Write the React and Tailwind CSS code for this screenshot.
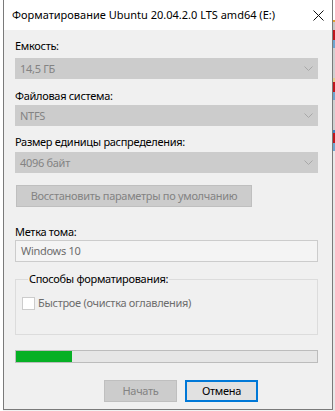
import React from 'react';

// Диалог форматирования Windows (отключённое состояние во время форматирования)
const font = { fontFamily: '"Noto Sans", "Liberation Sans", sans-serif' };

function Chevron() {
  return (
    <svg width="9" height="5" viewBox="0 0 9 5" className="shrink-0">
      <path d="M0.5 0.5 L4.5 4.5 L8.5 0.5" fill="none" stroke="#a8a8a8" strokeWidth="1" />
    </svg>
  );
}

function Combo({ value, className }) {
  return (
    <div className={`ml-[11px] w-[303px] h-[21px] flex items-center justify-between bg-[#cccccc] border border-[#cccccc] pl-[4px] pr-[4px] ${className}`}>
      <span className="text-[#838383] leading-4">{value}</span>
      <Chevron />
    </div>
  );
}

function Label({ children, className }) {
  return <div className={`ml-[11px] h-4 leading-4 text-black ${className}`}>{children}</div>;
}

export default function App() {
  return (
    <div className="w-[335px] h-[411px] flex bg-[#f3f3f3] overflow-hidden text-[11px]" style={font}>
      <div className="w-[3px] bg-white" />
      <div className="w-[330px] h-[410px] flex flex-col border-l border-r border-b border-[#7a7a7a] bg-[#f0f0f0] tracking-[-0.3px]">
        {/* заголовок окна */}
        <div className="h-[30px] bg-white flex items-center justify-between pl-[8px] pr-[8px]">
          <span className="text-black leading-4 whitespace-nowrap tracking-normal">Форматирование Ubuntu 20.04.2.0 LTS amd64 (E:)</span>
          <svg width="11" height="11" viewBox="0 0 11 11">
            <path d="M0.5 0.5 L10.5 10.5 M10.5 0.5 L0.5 10.5" stroke="#111" strokeWidth="1" />
          </svg>
        </div>

        <Label className="mt-[8px]">Емкость:</Label>
        <Combo value="14,5 ГБ" className="mt-[4px]" />

        <Label className="mt-[9px]">Файловая система:</Label>
        <Combo value="NTFS" className="mt-[1px]" />

        <Label className="mt-[8px]">Размер единицы распределения:</Label>
        <Combo value="4096 байт" className="mt-[2px]" />

        <div className="ml-[12px] mt-[12px] w-[236px] h-[22px] flex items-center justify-center bg-[#cccccc] border border-[#bfbfbf] text-[#838383] whitespace-nowrap">
          Восстановить параметры по умолчанию
        </div>

        <Label className="mt-[17px]">Метка тома:</Label>
        <div className="ml-[11px] w-[303px] h-[22px] flex items-center bg-[#f4f4f4] border border-[#cccccc] pl-[5px] text-[#6d6d6d]">
          Windows 10
        </div>

        <fieldset className="ml-[11px] mt-[9px] w-[303px] h-[64px] border border-[#dcdcdc] pl-[6px]">
          <legend className="ml-[6px] px-[1px] leading-4 text-black">Способы форматирования:</legend>
          <div className="mt-[8px] flex items-center">
            <div className="w-[13px] h-[13px] bg-white border border-[#cccccc]" />
            <span className="ml-[3px] leading-4 text-[#6d6d6d]">Быстрое (очистка оглавления)</span>
          </div>
        </fieldset>

        <div className="ml-[11px] mt-[15px] w-[303px] h-[13px] bg-[#e6e6e6] border border-[#bcbcbc] flex">
          <div className="w-[56px] h-full bg-[#06b025]" />
        </div>

        <div className="mt-[17px] pl-[100px] flex gap-[8px]">
          <div className="w-[73px] h-[22px] flex items-center justify-center bg-[#cccccc] border border-[#bfbfbf] text-[#838383]">
            Начать
          </div>
          <div className="w-[73px] h-[22px] flex items-center justify-center bg-[#e1e1e1] border-2 border-[#0078d7] text-black">
            Отмена
          </div>
        </div>
      </div>
      {/* край соседнего окна */}
      <div className="w-[2px] flex flex-col">
        <div className="h-[20px] bg-white" />
        <div className="h-[2px] bg-[#e0a030]" />
        <div className="h-[8px] bg-[#c8c8c8]" />
        <div className="h-[10px] bg-[#c0141c]" />
        <div className="h-[8px] bg-[#6fa6d0]" />
        <div className="h-[30px] bg-[#d0d0d0]" />
        <div className="h-[4px] bg-[#e0d090]" />
        <div className="h-[10px] bg-[#c0141c]" />
        <div className="h-[8px] bg-[#6fa6d0]" />
        <div className="h-[30px] bg-[#d0d0d0]" />
        <div className="h-[3px] bg-[#4080c0]" />
        <div className="h-[10px] bg-[#c0141c]" />
        <div className="h-[8px] bg-[#6fa6d0]" />
        <div className="flex-1 bg-[#e8e8e8]" />
      </div>
    </div>
  );
}
